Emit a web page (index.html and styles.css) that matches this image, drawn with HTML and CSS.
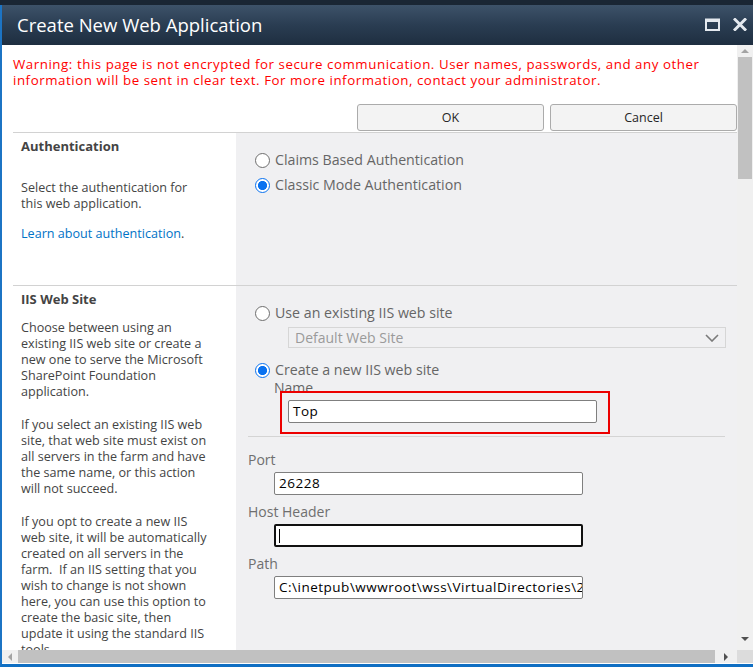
FILE: index.html
```html
<!DOCTYPE html>
<html lang="en">
<head>
<meta charset="utf-8">
<title>Create New Web Application</title>
<link rel="stylesheet" href="styles.css">
</head>
<body>
<div class="topstrip"></div>
<div class="window">
  <div class="titlebar">
    <span class="title">Create New Web Application</span>
    <div class="ctrls">
      <svg class="ic-max" width="15" height="13" viewBox="0 0 15 13"><rect x="1" y="1.5" width="13" height="10.5" fill="none" stroke="#e4e9ef" stroke-width="2"/><rect x="1" y="1" width="13" height="3" fill="#e4e9ef"/></svg>
      <svg class="ic-close" width="14" height="13" viewBox="0 0 14 13"><path d="M2 1.5 L12 11.5 M12 1.5 L2 11.5" stroke="#e4e9ef" stroke-width="3" stroke-linecap="square"/></svg>
    </div>
  </div>
  <div class="main">
    <div class="viewport">
      <div class="page">
        <p class="warning">Warning: this page is not encrypted for secure communication. User names, passwords, and any other information will be sent in clear text. For more information, contact your administrator.</p>
        <div class="buttons">
          <button class="btn">OK</button>
          <button class="btn">Cancel</button>
        </div>
        <div class="section sec-auth">
          <div class="desc">
            <h3 class="sec-title">Authentication</h3>
            <p class="sec-text first">Select the authentication for<br>this web application.</p>
            <p class="sec-text"><a class="link" href="#">Learn about authentication</a>.</p>
          </div>
          <div class="fields">
            <div class="radio-row"><span class="radio"></span><span class="rlabel">Claims Based Authentication</span></div>
            <div class="radio-row"><span class="radio on"></span><span class="rlabel">Classic Mode Authentication</span></div>
          </div>
        </div>
        <div class="section sec-iis">
          <div class="desc">
            <h3 class="sec-title">IIS Web Site</h3>
            <p class="sec-text tight">Choose between using an<br>existing IIS web site or create a<br>new one to serve the Microsoft<br>SharePoint Foundation<br>application.</p>
            <p class="sec-text">If you select an existing IIS web<br>site, that web site must exist on<br>all servers in the farm and have<br>the same name, or this action<br>will not succeed.</p>
            <p class="sec-text">If you opt to create a new IIS<br>web site, it will be automatically<br>created on all servers in the<br>farm.&nbsp; If an IIS setting that you<br>wish to change is not shown<br>here, you can use this option to<br>create the basic site, then<br>update it using the standard IIS<br>tools.</p>
          </div>
          <div class="fields">
            <div class="radio-row"><span class="radio"></span><span class="rlabel">Use an existing IIS web site</span></div>
            <div class="select">
              <span class="select-text">Default Web Site</span>
              <svg width="14" height="8" viewBox="0 0 14 8"><path d="M1 1 L7 7 L13 1" fill="none" stroke="#7a7a7a" stroke-width="1.6"/></svg>
            </div>
            <div class="radio-row r2"><span class="radio on"></span><span class="rlabel">Create a new IIS web site</span></div>
            <div class="name-label">Name</div>
            <div class="highlight">
              <div class="input">Top</div>
            </div>
            <div class="divider"></div>
            <div class="flabel">Port</div>
            <div class="input field">26228</div>
            <div class="flabel">Host Header</div>
            <div class="input field focus"><span class="caret"></span></div>
            <div class="flabel">Path</div>
            <div class="input field clip">C:\inetpub\wwwroot\wss\VirtualDirectories\26228</div>
          </div>
        </div>
      </div>
    </div>
    <div class="vscroll">
      <div class="arrow-up"></div>
      <div class="vthumb"></div>
      <div class="vtrack"></div>
      <div class="arrow-down"></div>
    </div>
  </div>
  <div class="hrow">
    <div class="hscroll">
      <div class="arrow-left"></div>
      <div class="hthumb"></div>
      <div class="arrow-right"></div>
    </div>
    <div class="corner"></div>
  </div>
  <div class="bottomgap"></div>
</div>
</body>
</html>
```

FILE: styles.css
```css
* { box-sizing: border-box; }
html, body { margin: 0; padding: 0; }
body {
  width: 753px;
  height: 667px;
  overflow: hidden;
  font-family: "Open Sans", "Noto Sans", sans-serif;
  background: #fff;
}
.topstrip { height: 5px; background: #1a2634; }
.window {
  height: 662px;
  border-left: 2px solid #1c74c4;
  border-bottom: 3px solid #0f6fc3;
  display: flex;
  flex-direction: column;
  background: #fff;
}
.titlebar {
  height: 40px;
  flex: none;
  display: flex;
  align-items: center;
  justify-content: space-between;
  padding: 0 6px 0 15px;
  background: linear-gradient(#3d5269, #2a3d52 50%, #1e2e40);
}
.title {
  color: #fff;
  font-size: 18.5px;
  line-height: 24px;
  margin-top: -1px;
}
.ctrls { display: flex; align-items: center; gap: 13px; margin-top: -2px; }
.ic-max, .ic-close { display: block; }

.main { height: 605px; flex: none; display: flex; }
.viewport { flex: 1; overflow: hidden; padding-left: 1px; }
.page { width: 734px; padding-left: 10px; }

.warning {
  margin: 11px 0 0;
  color: #f00;
  font-size: 13.3px;
  letter-spacing: 0.55px;
  line-height: 16px;
  width: 724px;
}
.buttons {
  display: flex;
  justify-content: flex-end;
  gap: 6px;
  margin-top: 16px;
  margin-bottom: 1px;
}
.btn {
  width: 187px;
  height: 27px;
  border: 1px solid #ababab;
  border-radius: 3px;
  background: #f3f3f3;
  font-family: inherit;
  font-size: 12.5px;
  color: #262626;
  padding: 0;
}

.section {
  display: grid;
  grid-template-columns: 223px 1fr;
  border-top: 1px solid #d2d2d2;
}
.sec-auth { height: 153px; }
.sec-iis { height: 400px; }
.desc { padding: 5px 8px 0; color: #444; }
.sec-title {
  margin: 0;
  font-size: 13px;
  line-height: 16px;
  font-weight: 700;
  color: #444;
}
.sec-text {
  margin: 14px 0 0;
  font-size: 12.6px;
  line-height: 16px;
}
.sec-text.first { margin-top: 26px; }
.sec-text.tight { margin-top: 13px; }
.sec-iis .sec-text + .sec-text { margin-top: 17px; }
.link { color: #0072c6; text-decoration: none; }

.fields {
  background: #f0f0f2;
  padding: 17px 0 0 19px;
}
.radio-row {
  display: flex;
  align-items: center;
  height: 20px;
  margin-bottom: 5px;
}
.radio {
  width: 15px;
  height: 15px;
  border: 1px solid #6e6e6e;
  border-radius: 50%;
  background: #fff;
  flex: none;
}
.radio.on {
  border-color: #0a72f0;
  background: radial-gradient(circle at center, #0a72f0 0 4.3px, #fff 4.8px);
}
.rlabel {
  margin-left: 5px;
  font-size: 14.2px;
  color: #666;
  line-height: 20px;
}
.select {
  margin: -1px 0 0 33px;
  width: 438px;
  height: 21px;
  border: 1px solid #d6d6d6;
  background: #f0f0f2;
  display: flex;
  align-items: center;
  justify-content: space-between;
  padding: 0 6px 0 6px;
}
.select-text { font-size: 14px; color: #9a9a9a; line-height: 19px; }
.select svg { display: block; }
.radio-row.r2 { margin-top: 12px; margin-bottom: 0; }
.name-label {
  margin-left: 19px;
  font-size: 14px;
  line-height: 16px;
  color: #666;
}
.highlight {
  position: relative;
  margin: -5px 0 0 25px;
  width: 330px;
  height: 43px;
  border: 2px solid #ec0000;
  padding: 7px 0 0 6px;
}
.input {
  width: 309px;
  height: 23px;
  border: 1px solid #7f7f7f;
  border-radius: 2px;
  background: #fff;
  font-size: 13.5px;
  letter-spacing: 0.5px;
  line-height: 21px;
  color: #000;
  padding: 0 4px;
  white-space: nowrap;
  overflow: hidden;
}
.divider {
  margin: 2px 0 0 -7px;
  width: 477px;
  height: 1px;
  background: #d4d4d4;
}
.flabel {
  margin: 15px 0 0 -7px;
  font-size: 14px;
  line-height: 16px;
  color: #6f6f6f;
}
.flabel + .flabel { margin-top: 0; }
.input.field { margin: 4px 0 0 19px; }
.input.field + .flabel { margin-top: 9px; }
.input.focus {
  border: 2px solid #111;
  padding: 0 3px;
  display: flex;
  align-items: center;
}
.caret { width: 1px; height: 14px; background: #000; }
.input.clip { padding-right: 0; }

.vscroll {
  width: 16px;
  flex: none;
  background: #f0f0f0;
  display: flex;
  flex-direction: column;
  align-items: center;
}
.arrow-up {
  margin-top: 4px;
  width: 0; height: 0;
  border-left: 4px solid transparent;
  border-right: 4px solid transparent;
  border-bottom: 4px solid #a3a3a3;
}
.vthumb {
  margin-top: 4px;
  width: 14px;
  height: 122px;
  background: #c1c1c1;
}
.vtrack { flex: 1; }
.arrow-down {
  margin-bottom: 9px;
  width: 0; height: 0;
  border-left: 4px solid transparent;
  border-right: 4px solid transparent;
  border-top: 4px solid #505050;
}
.hrow { height: 14px; flex: none; display: flex; }
.hscroll {
  flex: 1;
  height: 13px;
  background: #f0f0f0;
  display: flex;
  align-items: center;
}
.arrow-left {
  margin: 0 6px 0 6px;
  width: 0; height: 0;
  border-top: 4px solid transparent;
  border-bottom: 4px solid transparent;
  border-right: 4px solid #a3a3a3;
}
.hthumb { width: 697px; height: 13px; background: #c1c1c1; }
.arrow-right {
  margin-left: 9px;
  width: 0; height: 0;
  border-top: 4px solid transparent;
  border-bottom: 4px solid transparent;
  border-left: 4px solid #505050;
}
.corner { width: 16px; height: 13px; background: #dcdcdc; }
.bottomgap { flex: 1; }
```
